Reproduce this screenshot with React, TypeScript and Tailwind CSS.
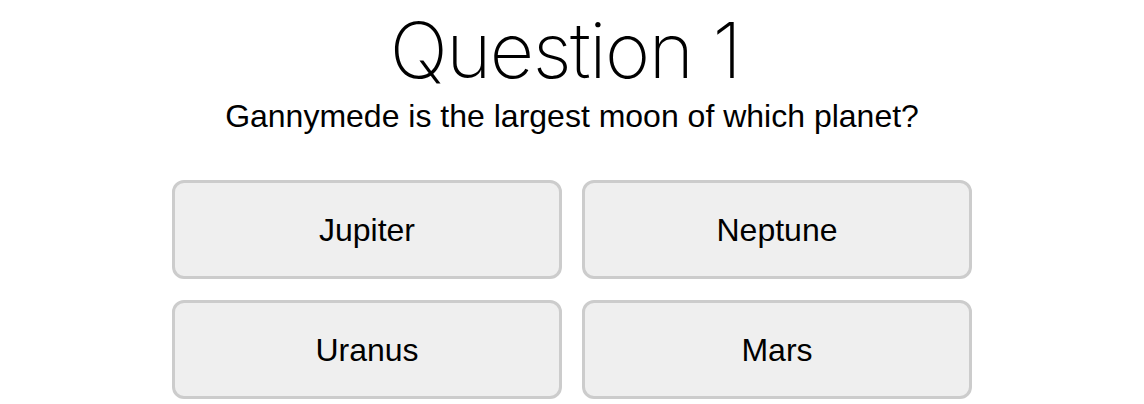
const answers = ["Jupiter", "Neptune", "Uranus", "Mars"];

export default function App() {
  return (
    <div className="flex min-h-screen flex-col items-center bg-white font-['Liberation_Sans',Arial,sans-serif] text-black">
      <h1 className="mt-[8px] pr-[14px] font-['Inter',sans-serif] text-[77px] font-extralight leading-[84px] tracking-[-1.5px]">Question 1</h1>
      <p className="mt-[8px] text-[32px] leading-[32px]">Gannymede is the largest moon of which planet?</p>
      <div className="mt-[48px] grid w-[800px] grid-cols-2 gap-x-[20px] gap-y-[21px]">
        {answers.map((a) => (
          <button
            key={a}
            className="flex h-[99px] items-center justify-center rounded-[12px] border-[3px] border-[#cccccc] bg-[#efefef] text-[32px]"
          >
            {a}
          </button>
        ))}
      </div>
    </div>
  );
}
